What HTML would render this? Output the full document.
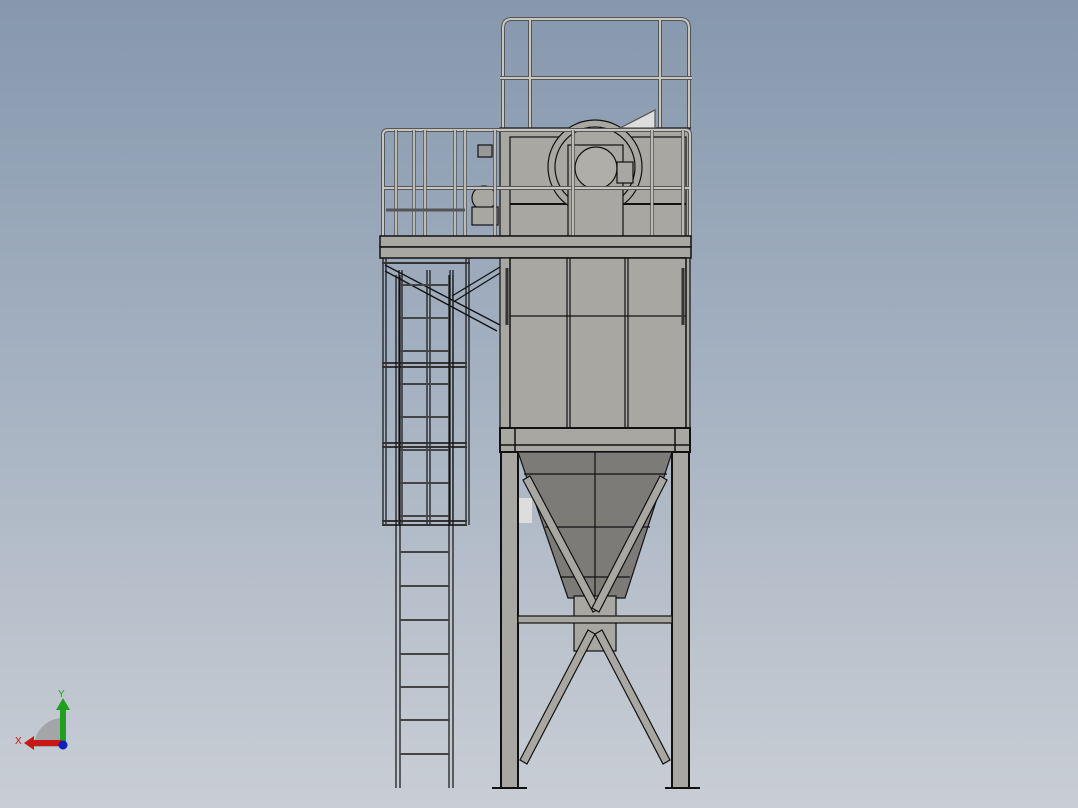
<!DOCTYPE html>
<html><head><meta charset="utf-8"><style>
html,body{margin:0;padding:0;}
body{width:1078px;height:808px;overflow:hidden;background:linear-gradient(#8698ae 0%,#a7b3c2 50%,#c9ced5 100%);}
svg{display:block}
</style></head><body>
<svg width="1078" height="808" viewBox="0 0 1078 808" xmlns="http://www.w3.org/2000/svg">
<g stroke="#111" stroke-width="1.2" fill="none">
<!-- roof railing -->
<g stroke="#444" stroke-width="1">
<path d="M503 128V28Q503 19 512 19H680Q689 19 689 28V128" stroke-width="4" stroke="#555"/>
<path d="M503 128V28Q503 19 512 19H680Q689 19 689 28V128" stroke-width="2" stroke="#c8c6c0"/>
<path d="M500 78H692M530 20V128M660 20V128" stroke-width="4" stroke="#555"/>
<path d="M500 78H692M530 20V128M660 20V128" stroke-width="2" stroke="#c8c6c0"/>
</g>
<!-- fan housing box -->
<rect x="500" y="128" width="190" height="108" fill="#a9a7a2"/>
<rect x="510" y="137" width="176" height="99" fill="#a9a7a2"/>
<path d="M510 204H686" stroke-width="2"/>
<circle cx="595" cy="167" r="47" fill="#a9a7a2"/>
<circle cx="595" cy="167" r="40"/>
<rect x="568" y="145" width="55" height="91" fill="#a9a7a2"/>
<circle cx="596" cy="168" r="21" fill="#b0aea9"/>
<rect x="617" y="162" width="16" height="21" fill="#a9a7a2"/>
<path d="M620 128L655 110V128Z" fill="#ddd" stroke="#555"/>
<!-- motor on left -->
<rect x="478" y="145" width="14" height="12" fill="#999"/>
<circle cx="484" cy="198" r="12" fill="#a9a7a2"/>
<rect x="472" y="207" width="26" height="18" fill="#a9a7a2"/>
<!-- platform railing -->
<g>
<path d="M383 236V135Q383 130 388 130H686Q690 130 690 135V236M383 188H690" stroke="#555" stroke-width="4"/>
<path d="M383 236V135Q383 130 388 130H686Q690 130 690 135V236M383 188H690" stroke="#c8c6c0" stroke-width="2"/>
<path d="M396 130V236M414 130V236M425 130V236M455 130V236M465 130V236M495 130V236M573 130V236M652 130V236M683 130V236" stroke="#555" stroke-width="3.5"/>
<path d="M396 130V236M414 130V236M425 130V236M455 130V236M465 130V236M495 130V236M573 130V236M652 130V236M683 130V236" stroke="#c8c6c0" stroke-width="1.8"/>
<path d="M386 210H465" stroke="#555" stroke-width="3"/>
</g>
<!-- deck -->
<rect x="380" y="236" width="311" height="11" fill="#a9a7a2" stroke-width="1.5"/>
<rect x="380" y="247" width="311" height="11" fill="#a9a7a2" stroke-width="1.5"/>
<!-- cage -->
<g stroke="#111" stroke-width="1.2">
<path d="M383 258V525M386 258V525M399 270V525M402 270V525M427 270V525M430 270V525M450 270V525M453 270V525M466 258V525M469 258V525"/>
<path d="M382 263H470M382 363H467M382 367H467M382 443H467M382 447H467M382 521H467M382 525H467" stroke="#333" stroke-width="2"/>
</g>
<!-- under-platform brace -->
<path d="M385 265L500 325M385 271L497 331M452 296L500 267M455 301L500 273" stroke-width="1.3"/>
<!-- ladder -->
<path d="M396 275V788M400 275V788M449 275V788M453 275V788"/>
<g stroke="#444" stroke-width="2">
<path d="M400 285H449M400 318H449M400 351H449M400 384H449M400 417H449M400 450H449M400 483H449M400 516H449M400 552H449M400 586H449M400 620H449M400 654H449M400 687H449M400 720H449M400 754H449"/>
</g>
<!-- main box -->
<rect x="500" y="258" width="190" height="170" fill="#a9a7a2"/>
<rect x="510" y="258" width="176" height="170" fill="#a9a7a2" stroke-width="1.5"/>
<path d="M510 316H686M567 258V428M570 258V428M625 258V428M628 258V428"/>
<path d="M507 268V325M683 268V325" stroke="#333" stroke-width="3"/>
<!-- band -->
<rect x="500" y="428" width="190" height="24" fill="#a9a7a2" stroke-width="2"/>
<path d="M500 445H690M515 428V452M675 428V452" stroke-width="1.5"/>
<!-- hopper -->
<path d="M518 452H672L625 598H568Z" fill="#7d7b78"/>
<path d="M595 452V598M524 474H667M545 527H650M560 577H630"/>
<rect x="518" y="498" width="14" height="25" fill="#ddd" stroke="none"/>
<!-- legs -->
<rect x="501" y="452" width="17" height="336" fill="#a9a7a2" stroke-width="2"/>
<rect x="672" y="452" width="17" height="336" fill="#a9a7a2" stroke-width="2"/>
<path d="M689 452V788" stroke-width="1"/>
<path d="M492 788H527M665 788H700" stroke-width="2"/>
<!-- center plate -->
<rect x="574" y="596" width="42" height="55" fill="#a9a7a2"/>
<!-- horizontal brace -->
<rect x="518" y="616" width="154" height="7" fill="#a9a7a2"/>
<!-- X braces -->
<g fill="#a9a7a2">
<path d="M523 480L530 476L600 608L593 612Z"/>
<path d="M667 480L660 476L592 608L599 612Z"/>
<path d="M588 630L595 634L527 764L520 760Z"/>
<path d="M602 630L595 634L663 764L670 760Z"/>
</g>
</g>
<!-- triad -->
<path d="M63 747A30 30 0 0 0 33 717L63 717Z" fill="#9a9a9a" opacity="0" />
<path d="M34 747A29 29 0 0 1 63 718V747Z" fill="#a3a5a8"/>
<rect x="60" y="708" width="6" height="38" fill="#1fa01f"/>
<path d="M56 710L63 698L70 710Z" fill="#1fa01f"/>
<rect x="32" y="740" width="30" height="6" fill="#c81818"/>
<path d="M34 736L24 743L34 750Z" fill="#c81818"/>
<circle cx="63" cy="745" r="4.5" fill="#1020c0"/>
<text x="58" y="697" font-family="Liberation Sans, sans-serif" font-size="10" fill="#1fa01f">Y</text>
<text x="15" y="744" font-family="Liberation Sans, sans-serif" font-size="10" fill="#d01010">X</text>
</svg>
</body></html>
